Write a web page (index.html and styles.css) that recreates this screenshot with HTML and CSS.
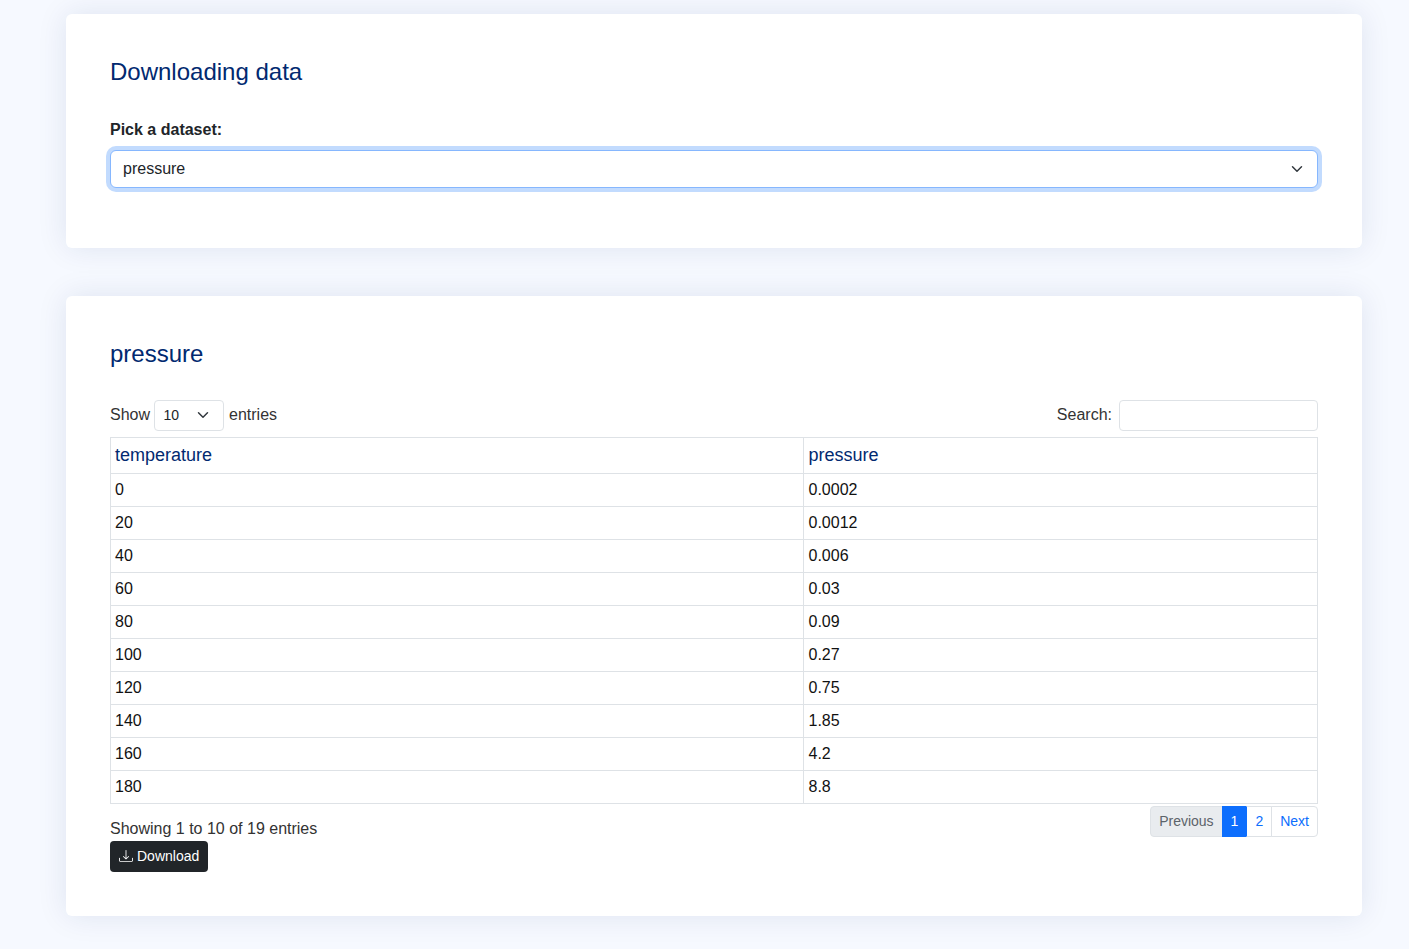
FILE: index.html
```html
<!DOCTYPE html>
<html lang="en">
<head>
    <meta charset="UTF-8">
    <meta name="viewport" content="width=device-width, initial-scale=1.0">
    <title>Downloading data</title>
    <link rel="stylesheet" href="styles.css">
</head>
<body>
    <!-- Dataset picker -->
    <section class="card">
        <h2 class="card-title">Downloading data</h2>
        <label class="pick-label" for="dataset">Pick a dataset:</label>
        <select class="pick-select" id="dataset">
            <option>pressure</option>
        </select>
    </section>

    <!-- Table -->
    <section class="card card-table">
        <h2 class="card-title">pressure</h2>

        <div class="table-top">
            <label class="length-label">Show
                <select class="length-select">
                    <option>10</option>
                </select>
                entries</label>
            <label class="search-label">Search:
                <input class="search-input" type="search">
            </label>
        </div>

        <table class="data-table">
            <thead>
                <tr><th class="col-temp">temperature</th><th class="col-pressure">pressure</th></tr>
            </thead>
            <tbody>
                <tr><td>0</td><td>0.0002</td></tr>
                <tr><td>20</td><td>0.0012</td></tr>
                <tr><td>40</td><td>0.006</td></tr>
                <tr><td>60</td><td>0.03</td></tr>
                <tr><td>80</td><td>0.09</td></tr>
                <tr><td>100</td><td>0.27</td></tr>
                <tr><td>120</td><td>0.75</td></tr>
                <tr><td>140</td><td>1.85</td></tr>
                <tr><td>160</td><td>4.2</td></tr>
                <tr><td>180</td><td>8.8</td></tr>
            </tbody>
        </table>

        <div class="table-bottom">
            <div class="info">Showing 1 to 10 of 19 entries</div>
            <ul class="pager">
                <li class="pager-item disabled">Previous</li>
                <li class="pager-item active">1</li>
                <li class="pager-item">2</li>
                <li class="pager-item">Next</li>
            </ul>
        </div>

        <a class="download-btn" href="#">
            <svg class="download-icon" viewBox="0 0 16 16" width="14" height="14" fill="currentColor">
                <path d="M.5 9.9a.5.5 0 0 1 .5.5v2.5a1 1 0 0 0 1 1h12a1 1 0 0 0 1-1v-2.5a.5.5 0 0 1 1 0v2.5a2 2 0 0 1-2 2H2a2 2 0 0 1-2-2v-2.5a.5.5 0 0 1 .5-.5z"/>
                <path d="M7.646 11.854a.5.5 0 0 0 .708 0l3-3a.5.5 0 0 0-.708-.708L8.5 10.293V1.5a.5.5 0 0 0-1 0v8.793L5.354 8.146a.5.5 0 1 0-.708.708l3 3z"/>
            </svg>
            Download
        </a>
    </section>
</body>
</html>
```

FILE: styles.css
```css
* {
    box-sizing: border-box;
}

body {
    margin: 0;
    padding: 14px 47px 33px 66px;
    background: #f6f9ff;
    color: #333;
    font-family: "Liberation Sans", Arial, sans-serif;
    font-size: 16px;
    line-height: 1.5;
}

.card {
    height: 234px;
    padding: 44px;
    margin-bottom: 48px;
    background: #fff;
    border-radius: 6px;
    box-shadow: 0 0 30px rgba(1, 41, 112, 0.1);
}

.card-table {
    height: 620px;
    margin-bottom: 0;
}

.card-title {
    margin: 0 0 31px;
    color: #012970;
    font-size: 24px;
    font-weight: 400;
    line-height: 1.2;
}

.pick-label {
    display: block;
    margin-bottom: 8px;
    font-weight: 700;
    color: #212529;
}

.pick-select,
.length-select {
    appearance: none;
    display: block;
    background-color: #fff;
    background-image: url("data:image/svg+xml,%3csvg xmlns='http://www.w3.org/2000/svg' viewBox='0 0 16 16'%3e%3cpath fill='none' stroke='%23343a40' stroke-linecap='round' stroke-linejoin='round' stroke-width='2' d='m2 5 6 6 6-6'/%3e%3c/svg%3e");
    background-repeat: no-repeat;
    font-family: inherit;
    color: #212529;
}

.pick-select {
    width: 100%;
    height: 38px;
    padding: 6px 36px 6px 12px;
    border: 1px solid #86b7fe;
    border-radius: 6px;
    background-position: right 12px center;
    background-size: 16px 12px;
    box-shadow: 0 0 0 4px rgba(13, 110, 253, 0.25);
    font-size: 16px;
    outline: 0;
}

.table-top {
    display: flex;
    justify-content: space-between;
    align-items: center;
    margin-bottom: 6px;
}

.length-label {
    display: flex;
    align-items: center;
    gap: 5px;
}

.length-label .length-select {
    margin-left: -1px;
}

.length-select {
    width: 70px;
    height: 31px;
    padding: 4px 24px 4px 8.5px;
    border: 1px solid #dee2e6;
    border-radius: 4px;
    background-position: right 12px center;
    background-size: 16px 12px;
    font-size: 14px;
}

.search-label {
    display: flex;
    align-items: center;
    gap: 7px;
}

.search-input {
    appearance: none;
    width: 199px;
    height: 31px;
    border: 1px solid #dee2e6;
    border-radius: 4px;
    background: #fff;
}

.data-table {
    width: 100%;
    border-collapse: collapse;
    table-layout: fixed;
    color: #111;
}

.data-table th,
.data-table td {
    padding: 4px;
    border: 1px solid #dee2e6;
    text-align: left;
    font-weight: 400;
}

.data-table th {
    height: 36px;
    font-size: 18px;
    line-height: 27px;
    color: #012970;
}

.data-table tr > :last-child {
    padding-left: 4.5px;
}

.col-temp {
    width: 693px;
}

.table-bottom {
    display: flex;
    justify-content: space-between;
    align-items: flex-start;
    padding-top: 2px;
}

.info {
    padding-top: 11px;
}

.pager {
    display: flex;
    margin: 0;
    padding: 0;
    list-style: none;
    font-size: 14px;
    line-height: 21px;
}

.pager-item {
    padding: 4px 8px;
    margin-left: -1px;
    border: 1px solid #dee2e6;
    background: #fff;
    color: #0d6efd;
}

.pager-item:first-child {
    margin-left: 0;
    border-radius: 4px 0 0 4px;
}

.pager-item:last-child {
    border-radius: 0 4px 4px 0;
}

.pager-item.disabled {
    background: #e9ecef;
    color: #5c636a;
}

.pager-item.active {
    border-color: #0d6efd;
    background: #0d6efd;
    color: #fff;
}

.pager-item.active + .pager-item {
    border-left-color: #0d6efd;
}

.download-btn {
    display: inline-flex;
    align-items: center;
    gap: 4px;
    height: 31px;
    padding: 4px 9px;
    border-radius: 4px;
    background: #212529;
    color: #fff;
    font-size: 14px;
    text-decoration: none;
}
```
